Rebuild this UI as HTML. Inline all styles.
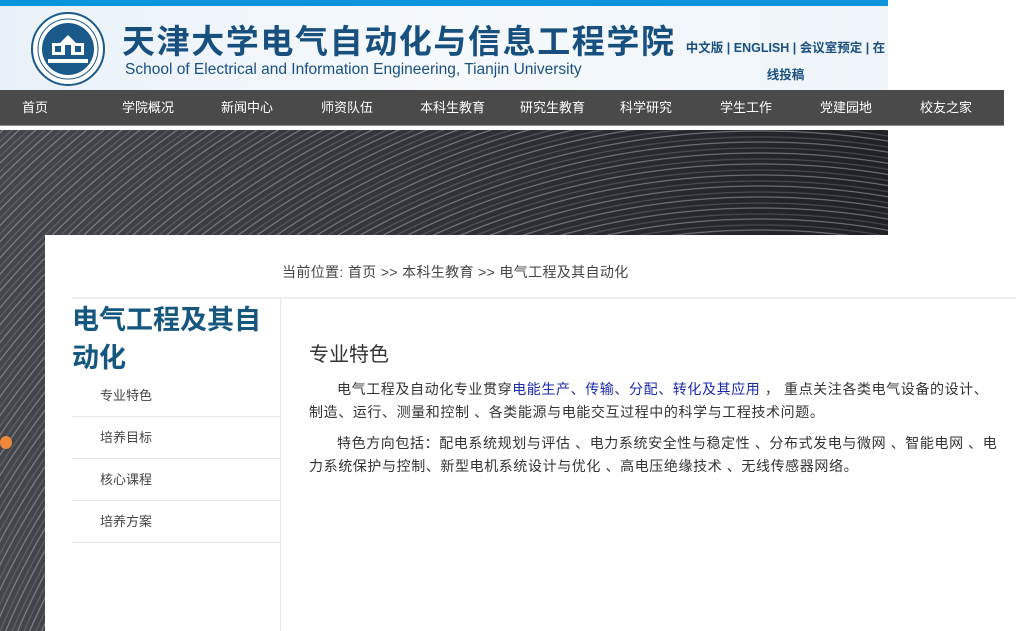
<!DOCTYPE html>
<html><head><meta charset="utf-8"><style>
*{margin:0;padding:0;box-sizing:border-box}
body{width:1016px;height:631px;overflow:hidden;background:#fff;position:relative;font-family:"Liberation Sans","Noto Sans CJK SC",sans-serif;}
.abs{position:absolute}
.stars{background:#2a2d33;background-image:repeating-radial-gradient(circle at 760px 820px,rgba(255,255,255,0) 0px,rgba(255,255,255,0) 4px,rgba(210,215,225,.5) 5px,rgba(255,255,255,0) 6px,rgba(255,255,255,0) 9px,rgba(160,170,185,.35) 10px,rgba(255,255,255,0) 11px),linear-gradient(90deg,#44464b,#2c2e33 60%,#202125);}
.nav a{position:absolute;top:0;line-height:36px;color:#fff;font-size:13px;text-decoration:none}
.menu div{position:absolute;left:72px;width:208px;height:42px;border-bottom:1px solid #e6e6e6;color:#444;font-size:13px;padding-left:28px;line-height:42px}
p.t{font-size:14px;color:#333;line-height:23px;text-indent:28px;margin-bottom:8px;letter-spacing:0.6px}
</style></head><body>
<div class="abs stars" style="left:0;top:130px;width:888px;height:501px"></div>
<div class="abs" style="left:888px;top:130px;width:128px;height:105px;background:#fff"></div>
<div class="abs" style="left:0;top:0;width:888px;height:6px;background:#0a95dc"></div>
<div class="abs" style="left:0;top:6px;width:888px;height:84px;background:linear-gradient(90deg,#e9f1f8,#f5f9fc 50%,#eef4f9)"></div>
<svg class="abs" style="left:30px;top:11px" width="76" height="76" viewBox="0 0 76 76">
<circle cx="38" cy="38" r="36" fill="#fff" stroke="#1a5a8a" stroke-width="2"/>
<circle cx="38" cy="38" r="26" fill="#1a5a8a"/>
<circle cx="38" cy="38" r="30" fill="none" stroke="#1a5a8a" stroke-width="1"/>
<path d="M22 44V32h32v12z M30 32l8-8 8 8" fill="#fff"/>
<rect x="25" y="35" width="6" height="6" fill="#1a5a8a"/><rect x="45" y="35" width="6" height="6" fill="#1a5a8a"/><rect x="35" y="34" width="6" height="10" fill="#1a5a8a"/>
<rect x="18" y="48" width="40" height="4" fill="#fff"/>
</svg>
<div class="abs" style="left:122px;top:18px;font-size:33px;font-weight:bold;color:#17507f;letter-spacing:1.6px;font-family:'Noto Sans CJK SC',sans-serif;line-height:42px">天津大学电气自动化与信息工程学院</div>
<div class="abs" style="left:125px;top:60px;font-size:15.5px;color:#1a5080;line-height:20px">School of Electrical and Information Engineering, Tianjin University</div>
<div class="abs" style="left:683px;top:35px;width:205px;text-align:center;font-size:12.5px;font-weight:bold;color:#1a5080;line-height:27px">中文版 | ENGLISH | 会议室预定 | 在线投稿</div>
<div class="abs nav" style="left:0;top:90px;width:1004px;height:36px;background:#4a4a4a;border-bottom:1px solid #8a8a8a">
<a style="left:22px">首页</a><a style="left:122px">学院概况</a><a style="left:221px">新闻中心</a><a style="left:321px">师资队伍</a><a style="left:420px">本科生教育</a><a style="left:520px">研究生教育</a><a style="left:620px">科学研究</a><a style="left:720px">学生工作</a><a style="left:820px">党建园地</a><a style="left:920px">校友之家</a></div>
<div class="abs" style="left:0;top:436px;width:12px;height:13px;border-radius:50%;background:#f0883a"></div>
<div class="abs" style="left:45px;top:235px;width:971px;height:396px;background:#fff"></div>
<div class="abs" style="left:282px;top:262px;font-size:14px;color:#444;line-height:20px;letter-spacing:0.35px">当前位置: 首页 &gt;&gt; 本科生教育 &gt;&gt; 电气工程及其自动化</div>
<div class="abs" style="left:72px;top:297px;width:944px;height:2px;background:#eee"></div>
<div class="abs" style="left:280px;top:299px;width:1px;height:332px;background:#e6e6e6"></div>
<div class="abs" style="left:72px;top:299px;width:205px;font-size:27px;font-weight:bold;color:#15577f;line-height:38px;font-family:'Noto Sans CJK SC',sans-serif">电气工程及其自动化</div>
<div class="menu">
<div style="top:375px">专业特色</div><div style="top:417px">培养目标</div><div style="top:459px">核心课程</div><div style="top:501px">培养方案</div></div>
<div class="abs" style="left:309px;top:342px;font-size:20px;color:#333;line-height:26px">专业特色</div>
<div class="abs" style="left:309px;top:378px;width:692px">
<p class="t">电气工程及自动化专业贯穿<span style="color:#1a2aa8">电能生产、传输、分配、转化及其应用</span> ， 重点关注各类电气设备的设计、制造、运行、测量和控制 、各类能源与电能交互过程中的科学与工程技术问题。</p>
<p class="t">特色方向包括：配电系统规划与评估 、电力系统安全性与稳定性 、分布式发电与微网 、智能电网 、电力系统保护与控制、新型电机系统设计与优化 、高电压绝缘技术 、无线传感器网络。</p>
</div>
</body></html>
